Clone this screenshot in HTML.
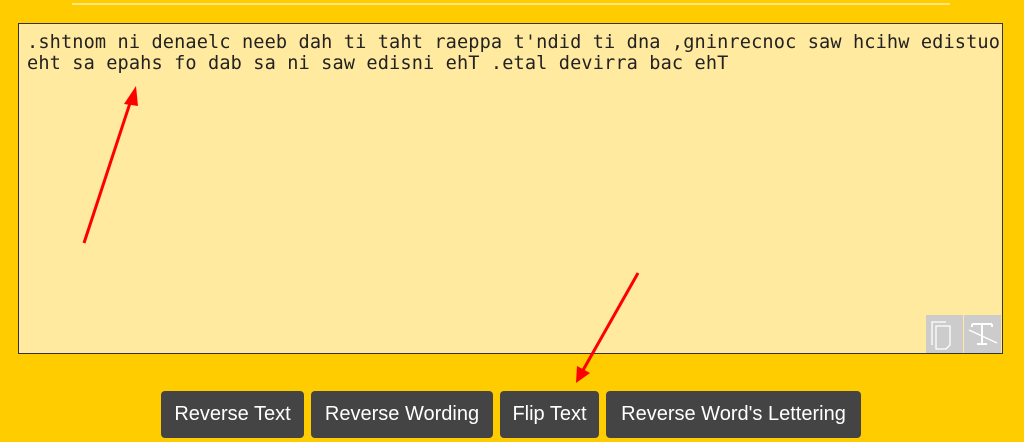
<!DOCTYPE html>
<html><head><style>
body{margin:0;width:1024px;height:442px;background:#ffcc00;position:relative;overflow:hidden;font-family:"Liberation Sans",sans-serif}
.line{position:absolute;left:72px;top:3px;width:878px;height:2px;background:#ffe680}
.ta{position:absolute;left:18px;top:23px;width:983px;height:329px;border:1px solid #333;background:#ffeaa0}
.txt{position:absolute;left:27px;top:32px;font-family:"DejaVu Sans Mono","Liberation Mono",monospace;font-size:18.6px;letter-spacing:0.12px;line-height:21px;color:#222;white-space:pre}
.ic{position:absolute;top:315px;width:37px;height:38px;background:#ccc}
.btn{position:absolute;top:391px;height:47px;background:#444;border-radius:4px;color:#fff;font-size:20px;line-height:47px;text-align:center}
</style></head><body>
<div class="line"></div>
<div class="ta"></div>
<div class="txt">.shtnom ni denaelc neeb dah ti taht raeppa t'ndid ti dna ,gninrecnoc saw hcihw edistuo
eht sa epahs fo dab sa ni saw edisni ehT .etal devirra bac ehT</div>
<div class="ic" style="left:926px"><svg width="37" height="38"><path d="M6 30V7h14M10 34V11h14v19l-4 4z" fill="none" stroke="#fff" stroke-width="1.3"/></svg></div>
<div class="ic" style="left:964px"><svg width="37" height="38"><path d="M8 9h20M18 9v20M13 29h10M8 9v3M28 9v3" fill="none" stroke="#fff" stroke-width="2"/><path d="M5 15l28 13" stroke="#fff" stroke-width="1.5"/></svg></div>
<svg style="position:absolute;left:0;top:0" width="1024" height="442">
<path d="M84 243L131 100" stroke="#f00" stroke-width="3"/><path d="M136 86L124 104L138 106z" fill="#f00"/>
<path d="M638 273L582 372" stroke="#f00" stroke-width="3"/><path d="M576 383L577 366L590 373z" fill="#f00"/>
</svg>
<div class="btn" style="left:161px;width:143px">Reverse Text</div>
<div class="btn" style="left:311px;width:182px">Reverse Wording</div>
<div class="btn" style="left:500px;width:99px">Flip Text</div>
<div class="btn" style="left:606px;width:255px">Reverse Word's Lettering</div>
</body></html>
